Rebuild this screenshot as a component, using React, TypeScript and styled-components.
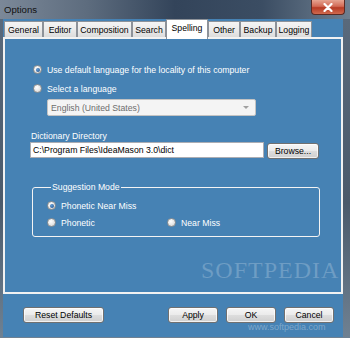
import React from 'react';
import styled, { createGlobalStyle } from 'styled-components';

const GlobalStyle = createGlobalStyle`
    html, body {
        margin: 0;
        padding: 0;
        overflow: hidden;
        background: #3a4757;
    }
`

const tabs = [
    { label: 'General', width: 39 },
    { label: 'Editor', width: 34 },
    { label: 'Composition', width: 55 },
    { label: 'Search', width: 34 },
    { label: 'Spelling', width: 42, active: true },
    { label: 'Other', width: 32 },
    { label: 'Backup', width: 36 },
    { label: 'Logging', width: 36 },
]

const App = () => {
    return (
        <>
            <GlobalStyle />
            <Window>
                <TitleBar>
                    <Title>Options</Title>
                    <CloseButton>
                        <svg width="10" height="9" viewBox="0 0 10 9">
                            <path d="M1.5 1 L8.5 8 M8.5 1 L1.5 8" stroke="#fff" strokeWidth="2.2" strokeLinecap="round" />
                        </svg>
                    </CloseButton>
                </TitleBar>
                <Client>
                    <TabStrip>
                        {tabs.map(t => (
                            <Tab key={t.label} $width={t.width} $active={!!t.active}>{t.label}</Tab>
                        ))}
                    </TabStrip>
                    <Panel>
                        <RadioRow>
                            <Radio $checked />
                            Use default language for the locality of this computer
                        </RadioRow>
                        <RadioRow $top={6}>
                            <Radio />
                            Select a language
                        </RadioRow>
                        <Select>
                            English (United States)
                            <Arrow />
                        </Select>
                        <FieldLabel>Dictionary Directory</FieldLabel>
                        <InputRow>
                            <TextInput>C:\Program Files\IdeaMason 3.0\dict</TextInput>
                            <Button $width={52} $top={1}>Browse...</Button>
                        </InputRow>
                        <GroupBox>
                            <Legend>Suggestion Mode</Legend>
                            <RadioRow $indent={0}>
                                <Radio $checked />
                                Phonetic Near Miss
                            </RadioRow>
                            <OptionLine>
                                <RadioRow $indent={0} $width={120}>
                                    <Radio />
                                    Phonetic
                                </RadioRow>
                                <RadioRow $indent={0}>
                                    <Radio />
                                    Near Miss
                                </RadioRow>
                            </OptionLine>
                        </GroupBox>
                    </Panel>
                    <ButtonBar>
                        <Button $width={81}>Reset Defaults</Button>
                        <Spacer />
                        <Button $width={50}>Apply</Button>
                        <Button $width={50}>OK</Button>
                        <Button $width={50}>Cancel</Button>
                    </ButtonBar>
                    <Watermark>SOFTPEDIA</Watermark>
                    <WatermarkUrl>www.softpedia.com</WatermarkUrl>
                </Client>
            </Window>
        </>
    )
}

const Window = styled.div`
    position: relative;
    display: flex;
    flex-direction: column;
    width: 350px;
    height: 338px;
    background: linear-gradient(180deg, #5b6b7d 0%, #4b5a6b 60%, #6f8192 100%);
    font-family: "Liberation Sans", Arial, sans-serif;
    font-size: 8.7px;
    overflow: hidden;
`

const TitleBar = styled.div`
    display: flex;
    align-items: flex-start;
    height: 19px;
    padding-left: 4px;
    background: linear-gradient(90deg, #7b8898 0%, #5d6c7e 25%, #33445a 50%, #3b4d63 75%, #6e7f90 100%);
`

const Title = styled.div`
    margin-top: 4px;
    font-size: 9.6px;
    color: #111;
`

const CloseButton = styled.div`
    display: flex;
    align-items: center;
    justify-content: center;
    margin-left: auto;
    margin-right: 5px;
    width: 34px;
    height: 15px;
    border: 1px solid #5a2a24;
    border-top: none;
    border-radius: 0 0 4px 4px;
    box-sizing: border-box;
    background: linear-gradient(180deg, #e6a491 0%, #d26a55 45%, #b63a24 55%, #cf6a4f 100%);
`

const Client = styled.div`
    position: relative;
    display: flex;
    flex-direction: column;
    flex: 1;
    margin: 0 7px 1px 3px;
    background: #4682b4;
`

const TabStrip = styled.div`
    display: flex;
    align-items: flex-end;
    height: 18px;
    padding-left: 1px;
`

const Tab = styled.div<{ $width: number; $active: boolean }>`
    position: relative;
    z-index: ${p => (p.$active ? 1 : 0)};
    display: flex;
    align-items: center;
    justify-content: center;
    box-sizing: border-box;
    width: ${p => p.$width}px;
    height: ${p => (p.$active ? 20 : 16)}px;
    margin-bottom: ${p => (p.$active ? -2 : 0)}px;
    padding-bottom: ${p => (p.$active ? 3 : 0)}px;
    border: 1px solid #8d9299;
    border-bottom: none;
    background: ${p => (p.$active ? '#fff' : 'linear-gradient(180deg, #f4f4f4 0%, #ebebeb 50%, #dcdcdc 100%)')};
    color: #000;
    white-space: nowrap;
`

const Panel = styled.div`
    display: flex;
    flex-direction: column;
    align-items: flex-start;
    box-sizing: border-box;
    height: 257px;
    padding: 24px 0 0 25px;
    border: 2px solid #f2f2f2;
    color: #fff;
`

const RadioRow = styled.div<{ $top?: number; $indent?: number; $width?: number }>`
    display: flex;
    align-items: center;
    gap: 5px;
    height: 13px;
    margin-top: ${p => p.$top ?? 0}px;
    margin-left: ${p => p.$indent ?? 3}px;
    width: ${p => (p.$width ? `${p.$width}px` : 'auto')};
    color: #fff;
    white-space: nowrap;
`

const Radio = styled.span<{ $checked?: boolean }>`
    position: relative;
    flex: none;
    width: 9px;
    height: 9px;
    box-sizing: border-box;
    border-radius: 50%;
    border: 1px solid #8e8f8f;
    background: radial-gradient(circle at 40% 35%, #ffffff 0%, #e6e6e6 55%, #c8c8c8 100%);

    &::after {
        content: '';
        display: ${p => (p.$checked ? 'block' : 'none')};
        position: absolute;
        left: 1.5px;
        top: 1.5px;
        width: 4px;
        height: 4px;
        border-radius: 50%;
        background: radial-gradient(circle at 40% 35%, #5f9ad6 0%, #1d4f86 100%);
    }
`

const Select = styled.div`
    display: flex;
    align-items: center;
    box-sizing: border-box;
    width: 209px;
    height: 17px;
    margin: 4px 0 0 17px;
    padding: 0 6px 0 3px;
    border: 1px solid #c3c3c3;
    border-radius: 2px;
    background: #f4f4f4;
    color: #6d6d6d;
`

const Arrow = styled.span`
    margin-left: auto;
    width: 0;
    height: 0;
    border-left: 3px solid transparent;
    border-right: 3px solid transparent;
    border-top: 3px solid #a0a0a0;
`

const FieldLabel = styled.div`
    height: 12px;
    margin: 14px 0 0 1px;
    line-height: 12px;
    color: #fff;
`

const InputRow = styled.div`
    display: flex;
    align-items: flex-start;
    gap: 3px;
    height: 17px;
`

const TextInput = styled.div`
    display: flex;
    align-items: center;
    box-sizing: border-box;
    width: 234px;
    height: 16px;
    padding-left: 2px;
    border: 1px solid #abadb3;
    background: #fff;
    color: #000;
    white-space: nowrap;
`

const Button = styled.div<{ $width: number; $top?: number }>`
    display: flex;
    align-items: center;
    justify-content: center;
    box-sizing: border-box;
    width: ${p => p.$width}px;
    height: 16px;
    margin-top: ${p => p.$top ?? 0}px;
    border: 1px solid #707070;
    border-radius: 3px;
    background: linear-gradient(180deg, #f6f6f6 0%, #ebebeb 48%, #dddddd 52%, #cfcfcf 100%);
    box-shadow: inset 0 0 0 1px rgba(255, 255, 255, 0.7);
    color: #000;
    white-space: nowrap;
`

const GroupBox = styled.fieldset`
    display: flex;
    flex-direction: column;
    gap: 4px;
    box-sizing: border-box;
    width: 288px;
    min-width: 0;
    margin: 22px 0 0 2px;
    padding: 6px 0 7px 14px;
    border: 1px solid #f4f4f4;
    border-radius: 3px;
`

const Legend = styled.legend`
    height: 12px;
    margin-left: 4px;
    padding: 0 1px;
    line-height: 12px;
    color: #fff;
`

const OptionLine = styled.div`
    display: flex;
`

const ButtonBar = styled.div`
    display: flex;
    align-items: flex-start;
    gap: 8px;
    padding: 13px 9px 0 20px;
`

const Spacer = styled.div`
    flex: 1;
`

const Watermark = styled.div`
    position: absolute;
    left: 198px;
    top: 238px;
    font-family: "Liberation Serif", "Times New Roman", serif;
    font-size: 24px;
    letter-spacing: 1px;
    color: rgba(255, 255, 255, 0.22);
    pointer-events: none;
`

const WatermarkUrl = styled.div`
    position: absolute;
    left: 245px;
    top: 303px;
    font-size: 9px;
    color: rgba(255, 255, 255, 0.3);
    pointer-events: none;
`

export default App;
